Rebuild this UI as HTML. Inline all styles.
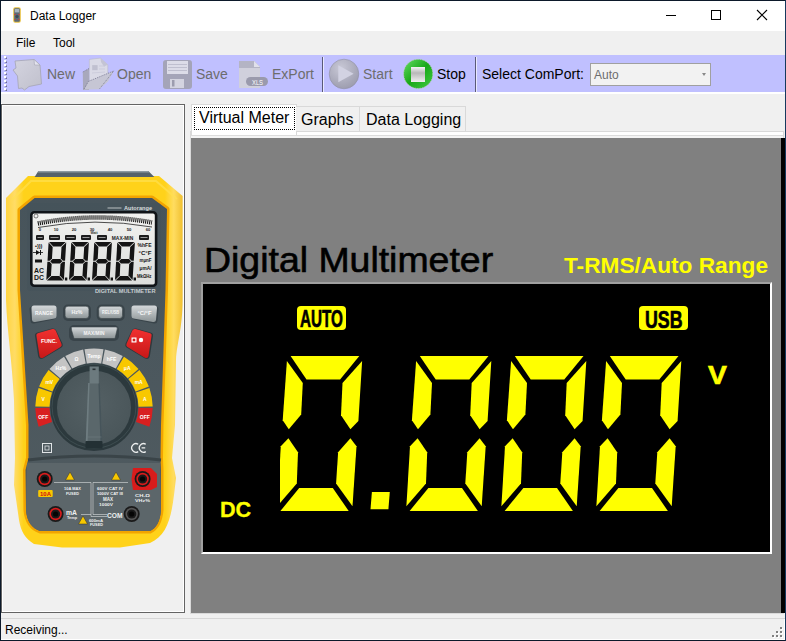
<!DOCTYPE html>
<html><head><meta charset="utf-8">
<style>
*{margin:0;padding:0;box-sizing:border-box}
html,body{width:786px;height:641px;overflow:hidden;background:#f0f0f0;font-family:"Liberation Sans",sans-serif}
.a{position:absolute}
.t{position:absolute;white-space:nowrap;line-height:1}
</style></head><body>
<div class="a" style="left:0;top:0;width:786px;height:641px;background:#f0f0f0;overflow:hidden">

<!-- title bar -->
<div class="a" style="left:0;top:0;width:786px;height:31px;background:#fff"></div>
<div class="t" style="left:30px;top:10px;font-size:12px;color:#000">Data Logger</div>
<svg class="a" style="left:0;top:0" width="786" height="31">
<rect x="13.2" y="7.3" width="7.6" height="15.4" rx="2" fill="#e8c040"/>
<rect x="14.2" y="8.3" width="5.6" height="13.4" rx="1" fill="#5a6a78"/>
<rect x="14.8" y="9" width="4.4" height="3.4" fill="#a8b4c0"/>
<circle cx="15" cy="14.5" r="0.8" fill="#c84040"/><circle cx="19" cy="14.5" r="0.8" fill="#c84040"/>
<circle cx="17" cy="16.5" r="1.6" fill="#3a4a58"/>
<circle cx="15.2" cy="19.5" r="0.7" fill="#c84040"/><circle cx="18.8" cy="19.5" r="0.7" fill="#c84040"/>
<line x1="666" y1="15.5" x2="676" y2="15.5" stroke="#000" stroke-width="1"/>
<rect x="711.5" y="10.5" width="9" height="9" fill="none" stroke="#000" stroke-width="1"/>
<path d="M757,10 L767,20 M767,10 L757,20" stroke="#000" stroke-width="1.1"/>
</svg>

<!-- menu -->
<div class="a" style="left:0;top:31px;width:786px;height:24px;background:#f0f0f0"></div>
<div class="t" style="left:16px;top:37px;font-size:12px;color:#000">File</div>
<div class="t" style="left:53px;top:37px;font-size:12px;color:#000">Tool</div>

<!-- toolbar -->
<div class="a" style="left:1px;top:55px;width:785px;height:37px;background:#c0c0ff"></div>
<div class="a" style="left:1px;top:92px;width:785px;height:2px;background:#fff"></div>


<!-- toolbar items -->
<svg class="a" style="left:0;top:0" width="786" height="100">
<defs>
<linearGradient id="gNew" x1="0" y1="0" x2="1" y2="1"><stop offset="0" stop-color="#d4d4e0"/><stop offset="1" stop-color="#c0c0cc"/></linearGradient>
<radialGradient id="gStart" cx="0.4" cy="0.3" r="0.8"><stop offset="0" stop-color="#c8c8d6"/><stop offset="1" stop-color="#9898aa"/></radialGradient>
<linearGradient id="gStop" x1="0" y1="0" x2="1" y2="1"><stop offset="0" stop-color="#66dd66"/><stop offset="0.5" stop-color="#18a818"/><stop offset="1" stop-color="#44cc44"/></linearGradient>
<linearGradient id="gSq" x1="0" y1="0" x2="0" y2="1"><stop offset="0" stop-color="#f4f4f4"/><stop offset="0.4" stop-color="#b8b8b8"/><stop offset="1" stop-color="#f0f0f0"/></linearGradient>
</defs>
<!-- New -->
<polygon points="15,61 34,59.5 40,65 41.5,84 29,86.5 24.5,90 22,88 18.5,88.5 17.5,76 13,70 16,68" fill="url(#gNew)" stroke="#a4a4b4" stroke-width="0.8"/>
<polygon points="34,59.5 40,65 34.5,65" fill="#e4e4ee" stroke="#a4a4b4" stroke-width="0.6"/>
<!-- Open -->
<polygon points="82.8,72 89,68.5 89,90 83,90" fill="#a8a8bc"/>
<polygon points="89.3,59.4 100.4,58.1 107.8,64.8 107.8,74 89.5,82" fill="#dadae6" stroke="#b4b4c4" stroke-width="0.5"/>
<polygon points="100.4,58.1 107.8,64.8 104,66.5 101,62" fill="#c4c4d4"/>
<rect x="92.2" y="65.1" width="5.4" height="5.1" fill="#c0c0d0"/>
<line x1="99" y1="66" x2="105" y2="66" stroke="#c8c8d8" stroke-width="0.8"/>
<line x1="99" y1="69" x2="105" y2="69" stroke="#c8c8d8" stroke-width="0.8"/>
<line x1="92" y1="73" x2="105" y2="72" stroke="#c8c8d8" stroke-width="0.8"/>
<polygon points="88.4,81.4 113.8,70.9 108,81.4 99.2,89.3 84,89.5" fill="#c6c6d4"/>
<polyline points="82.8,72 89,68.5" fill="none" stroke="#70708a" stroke-width="0.8" stroke-dasharray="1,1"/>
<polyline points="84,89 88.4,81.4 113.8,70.9 99.2,89.3" fill="none" stroke="#70708a" stroke-width="0.8" stroke-dasharray="1,1"/>
<!-- Save -->
<rect x="163" y="60" width="29" height="29" rx="3" fill="#a4a4b8"/>
<rect x="167" y="61" width="21" height="13" fill="#dcdce8"/>
<line x1="168" y1="64.5" x2="187" y2="64.5" stroke="#b8b8c8" stroke-width="0.8"/>
<line x1="168" y1="67.5" x2="187" y2="67.5" stroke="#b8b8c8" stroke-width="0.8"/>
<line x1="168" y1="70.5" x2="187" y2="70.5" stroke="#b8b8c8" stroke-width="0.8"/>
<rect x="170" y="79" width="14" height="9" fill="#d4d4e0"/>
<rect x="172" y="80" width="2.5" height="6.5" fill="#9c9cae"/>
<!-- ExPort -->
<polygon points="239,61 254,61 260,67 260,88 239,88" fill="#d0d0dc"/>
<polygon points="239,61 254,61 260,67 260,68 239,68" fill="#b4b4c4"/>
<polygon points="254,61 260,67 254,67" fill="#e0e0ea"/>
<rect x="246" y="77" width="22" height="9" rx="4.5" fill="#9a9aac"/>
<text x="252" y="84.5" font-family="Liberation Sans" font-size="8" fill="#fff" textLength="11" lengthAdjust="spacingAndGlyphs">XLS</text>
<!-- Start -->
<circle cx="344" cy="74" r="14.8" fill="url(#gStart)" stroke="#9090a4" stroke-width="0.6"/>
<polygon points="338.3,65.3 353.6,73.8 338.3,82.3" fill="#d2d2e2"/>
<!-- Stop -->
<circle cx="418.2" cy="73.9" r="14.6" fill="url(#gStop)" stroke="#c8c8c8" stroke-width="0.8" stroke-dasharray="1.5,1"/>
<rect x="411" y="67" width="14" height="15" fill="url(#gSq)"/>
</svg>

<div class="a" style="left:4px;top:56px;width:2px;height:2px;background:#fff"></div><div class="a" style="left:5px;top:57px;width:2px;height:2px;background:#6d6d8d;clip-path:polygon(100% 0,100% 100%,0 100%)"></div><div class="a" style="left:4px;top:60px;width:2px;height:2px;background:#fff"></div><div class="a" style="left:5px;top:61px;width:2px;height:2px;background:#6d6d8d;clip-path:polygon(100% 0,100% 100%,0 100%)"></div><div class="a" style="left:4px;top:64px;width:2px;height:2px;background:#fff"></div><div class="a" style="left:5px;top:65px;width:2px;height:2px;background:#6d6d8d;clip-path:polygon(100% 0,100% 100%,0 100%)"></div><div class="a" style="left:4px;top:68px;width:2px;height:2px;background:#fff"></div><div class="a" style="left:5px;top:69px;width:2px;height:2px;background:#6d6d8d;clip-path:polygon(100% 0,100% 100%,0 100%)"></div><div class="a" style="left:4px;top:72px;width:2px;height:2px;background:#fff"></div><div class="a" style="left:5px;top:73px;width:2px;height:2px;background:#6d6d8d;clip-path:polygon(100% 0,100% 100%,0 100%)"></div><div class="a" style="left:4px;top:76px;width:2px;height:2px;background:#fff"></div><div class="a" style="left:5px;top:77px;width:2px;height:2px;background:#6d6d8d;clip-path:polygon(100% 0,100% 100%,0 100%)"></div><div class="a" style="left:4px;top:80px;width:2px;height:2px;background:#fff"></div><div class="a" style="left:5px;top:81px;width:2px;height:2px;background:#6d6d8d;clip-path:polygon(100% 0,100% 100%,0 100%)"></div><div class="a" style="left:4px;top:84px;width:2px;height:2px;background:#fff"></div><div class="a" style="left:5px;top:85px;width:2px;height:2px;background:#6d6d8d;clip-path:polygon(100% 0,100% 100%,0 100%)"></div><div class="a" style="left:4px;top:88px;width:2px;height:2px;background:#fff"></div><div class="a" style="left:5px;top:89px;width:2px;height:2px;background:#6d6d8d;clip-path:polygon(100% 0,100% 100%,0 100%)"></div>
<div class="t" style="left:47px;top:67px;font-size:14px;color:#6d6d6d">New</div>
<div class="t" style="left:117px;top:67px;font-size:14px;color:#6d6d6d">Open</div>
<div class="t" style="left:196px;top:67px;font-size:14px;color:#6d6d6d">Save</div>
<div class="t" style="left:272px;top:67px;font-size:14px;color:#6d6d6d">ExPort</div>
<div class="a" style="left:322px;top:57px;width:1px;height:35px;background:#5a5a78"></div>
<div class="a" style="left:323px;top:57px;width:1px;height:35px;background:#e8e8ff"></div>
<div class="t" style="left:363px;top:67px;font-size:14px;color:#6d6d6d">Start</div>
<div class="t" style="left:437px;top:67px;font-size:14px;color:#000">Stop</div>
<div class="a" style="left:475px;top:57px;width:1px;height:35px;background:#5a5a78"></div>
<div class="a" style="left:476px;top:57px;width:1px;height:35px;background:#e8e8ff"></div>
<div class="t" style="left:482px;top:67px;font-size:14px;color:#000">Select ComPort:</div>
<div class="a" style="left:590px;top:63px;width:121px;height:23px;border:1px solid #a0a0a0;background:#f2f2f2"></div>
<div class="t" style="left:594px;top:69px;font-size:12px;color:#6d6d6d">Auto</div>
<div class="a" style="left:702px;top:73px;width:0;height:0;border-left:2.5px solid transparent;border-right:2.5px solid transparent;border-top:3px solid #888"></div>

<!-- left panel -->
<div class="a" style="left:1px;top:103px;width:1px;height:1px;background:#fff"></div>
<div class="a" style="left:1px;top:104px;width:184px;height:509px;border:1px solid #646464;background:#f0f0f0">
  <div class="a" style="left:0;top:0;right:0;bottom:0;border:1px solid #fff"></div>
</div>

<!-- meter --><svg class="a" style="left:0;top:0" width="186" height="614" viewBox="0 0 186 614">
<defs>
<linearGradient id="yb" x1="0" y1="0" x2="1" y2="0"><stop offset="0" stop-color="#ffd440"/><stop offset="0.05" stop-color="#ffdc66"/><stop offset="0.1" stop-color="#ffd21a"/><stop offset="0.9" stop-color="#ffd21a"/><stop offset="0.95" stop-color="#ffdc60"/><stop offset="1" stop-color="#f0c030"/></linearGradient>
<linearGradient id="face" x1="0" y1="0" x2="0" y2="1"><stop offset="0" stop-color="#47545b"/><stop offset="1" stop-color="#505b60"/></linearGradient>
<linearGradient id="lcd" x1="0" y1="0" x2="0" y2="1"><stop offset="0" stop-color="#f2f2f0"/><stop offset="1" stop-color="#dcdedc"/></linearGradient>
<linearGradient id="btn" x1="0" y1="0" x2="0" y2="1"><stop offset="0" stop-color="#d4d8da"/><stop offset="1" stop-color="#8c9496"/></linearGradient>
<linearGradient id="red" x1="0" y1="0" x2="0" y2="1"><stop offset="0" stop-color="#f03030"/><stop offset="1" stop-color="#c81818"/></linearGradient>
<radialGradient id="knob" cx="0.5" cy="0.45" r="0.55"><stop offset="0" stop-color="#546064"/><stop offset="1" stop-color="#4a565a"/></radialGradient>
<linearGradient id="ptr" x1="0" y1="0" x2="1" y2="0"><stop offset="0" stop-color="#4a5458"/><stop offset="0.5" stop-color="#6c7679"/><stop offset="1" stop-color="#424c50"/></linearGradient>
</defs>
<path d="M28,176 L159,176 L182.6,196 L182.6,300 C182.4,330 177,342 176,360 L175,425 L172,458 L176,478 L174,495 C171,520 166,536 150,543 L120,547.5 L62,547.5 L34,544 C25,538 21,532 19,520 L14,485 L15,458 L14,400 C12,360 7,330 6,300 L6,198 Z" fill="url(#yb)"/>
<path d="M12,200 L31,181 L156,181 L177,199" fill="none" stroke="#ffe050" stroke-width="2" opacity="0.7"/>
<polygon points="34.6,177 38.4,171 148.3,171 154.3,177" fill="#56626a"/>
<polygon points="38.4,171 148.3,171 149.5,172.5 37.6,172.5" fill="#8e9aa0"/>
<path d="M34.6,198 L152,198 L167,209 L165.5,290 L161,425 L160.5,458 L161,470 L161,510 C160,522 156,528 150,531 L40,531 C32,528 27,522 26,510 L25.5,470 L28.5,458 L28.5,425 L20,290 L20,210 Z" fill="none" stroke="#f2a400" stroke-width="5" stroke-linejoin="round"/>
<path d="M34.6,198 L152,198 L167,209 L165.5,290 L161,425 L160.5,458 L161,470 L161,510 C160,522 156,528 150,531 L40,531 C32,528 27,522 26,510 L25.5,470 L28.5,458 L28.5,425 L20,290 L20,210 Z" fill="url(#face)"/>
<path d="M27,463 L160,463 L161,510 C160,522 156,528 150,531 L40,531 C32,528 27,522 26,510 Z" fill="#5c666a"/>
<path d="M28,460 Q94,452 161,460" fill="none" stroke="#3a4448" stroke-width="3"/>
<rect x="27" y="203" width="134" height="88" rx="4" fill="#44515a" opacity="0.5"/>
<line x1="107.5" y1="208" x2="121.5" y2="208" stroke="#d8dcdc" stroke-width="0.8"/>
<text x="124" y="210" font-family="Liberation Sans" font-weight="bold" font-size="5.5" fill="#d8dcdc" textLength="28" lengthAdjust="spacingAndGlyphs">Autorange</text>
<rect x="31.3" y="212.3" width="124.8" height="73.4" rx="3" fill="url(#lcd)" stroke="#101418" stroke-width="2.6"/>
<text x="95" y="292.8" font-family="Liberation Sans" font-weight="bold" font-size="5.2" fill="#c8ced2" textLength="60.5" lengthAdjust="spacingAndGlyphs">DIGITAL MULTIMETER</text>
<path d="M37.8,223.5 Q95,212 152,222.5" fill="none" stroke="#1a1a1a" stroke-width="4.5" stroke-dasharray="1.1,0.9"/>
<path d="M38,227.5 Q95,217 152,227" fill="none" stroke="#222" stroke-width="0.8"/>
<circle cx="36" cy="216" r="2" fill="none" stroke="#333" stroke-width="0.6"/>
<text x="40" y="231" font-family="Liberation Sans" font-weight="bold" font-size="4.2" fill="#222" text-anchor="middle">0</text>
<text x="56" y="231" font-family="Liberation Sans" font-weight="bold" font-size="4.2" fill="#222" text-anchor="middle">10</text>
<text x="74" y="231" font-family="Liberation Sans" font-weight="bold" font-size="4.2" fill="#222" text-anchor="middle">20</text>
<text x="92" y="231" font-family="Liberation Sans" font-weight="bold" font-size="4.2" fill="#222" text-anchor="middle">30</text>
<text x="110" y="231" font-family="Liberation Sans" font-weight="bold" font-size="4.2" fill="#222" text-anchor="middle">40</text>
<text x="129" y="231" font-family="Liberation Sans" font-weight="bold" font-size="4.2" fill="#222" text-anchor="middle">50</text>
<text x="148" y="231" font-family="Liberation Sans" font-weight="bold" font-size="4.2" fill="#222" text-anchor="middle">60</text>
<text x="94" y="233.5" font-family="Liberation Sans" font-weight="bold" font-size="3.4" fill="#333" text-anchor="middle">Watt</text>
<rect x="36" y="235" width="8" height="5" rx="1" fill="#1c1c1c"/>
<rect x="37.5" y="237.2" width="5" height="0.8" fill="#bbbbbb"/>
<rect x="49" y="235" width="11" height="5" rx="1" fill="#1c1c1c"/>
<rect x="50.5" y="237.2" width="8" height="0.8" fill="#bbbbbb"/>
<rect x="65" y="235" width="11" height="5" rx="1" fill="#1c1c1c"/>
<rect x="66.5" y="237.2" width="8" height="0.8" fill="#bbbbbb"/>
<rect x="81" y="235" width="10" height="5" rx="1" fill="#1c1c1c"/>
<rect x="82.5" y="237.2" width="7" height="0.8" fill="#bbbbbb"/>
<rect x="97" y="235" width="10" height="5" rx="1" fill="#1c1c1c"/>
<rect x="98.5" y="237.2" width="7" height="0.8" fill="#bbbbbb"/>
<rect x="139" y="235" width="10" height="5" rx="1" fill="#1c1c1c"/>
<rect x="140.5" y="237.2" width="7" height="0.8" fill="#bbbbbb"/>
<text x="111.8" y="239.8" font-family="Liberation Sans" font-weight="bold" font-size="5.2" fill="#1a1a1a" textLength="21.4" lengthAdjust="spacingAndGlyphs">MAX-MIN</text>
<polygon points="49.1,242.0 65.7,242.0 61.0,246.4 53.2,246.4" fill="#141414"/>
<polygon points="66.2,242.5 65.1,260.8 62.9,260.8 60.8,258.6 61.5,246.9" fill="#141414"/>
<polygon points="65.0,261.8 63.9,280.0 59.8,275.6 60.5,263.9 62.8,261.8" fill="#141414"/>
<polygon points="46.8,280.5 63.4,280.5 59.3,276.1 51.5,276.1" fill="#141414"/>
<polygon points="47.4,261.8 49.6,261.8 51.7,263.9 51.0,275.6 46.3,280.0" fill="#141414"/>
<polygon points="48.6,242.5 52.7,246.9 52.0,258.6 49.7,260.8 47.5,260.8" fill="#141414"/>
<polygon points="50.2,261.2 52.5,259.1 60.3,259.1 62.4,261.2 60.0,263.4 52.2,263.4" fill="#141414"/>
<rect x="64.9" y="277.5" width="2.4" height="3" fill="#141414"/>
<polygon points="71.8,242.0 88.4,242.0 83.7,246.4 75.9,246.4" fill="#141414"/>
<polygon points="88.9,242.5 87.8,260.8 85.6,260.8 83.5,258.6 84.2,246.9" fill="#141414"/>
<polygon points="87.7,261.8 86.6,280.0 82.5,275.6 83.2,263.9 85.5,261.8" fill="#141414"/>
<polygon points="69.5,280.5 86.1,280.5 82.0,276.1 74.2,276.1" fill="#141414"/>
<polygon points="70.1,261.8 72.3,261.8 74.4,263.9 73.7,275.6 69.0,280.0" fill="#141414"/>
<polygon points="71.3,242.5 75.4,246.9 74.7,258.6 72.4,260.8 70.2,260.8" fill="#141414"/>
<polygon points="72.9,261.2 75.2,259.1 83.0,259.1 85.1,261.2 82.7,263.4 74.9,263.4" fill="#141414"/>
<rect x="87.6" y="277.5" width="2.4" height="3" fill="#141414"/>
<polygon points="94.8,242.0 111.4,242.0 106.7,246.4 98.9,246.4" fill="#141414"/>
<polygon points="111.9,242.5 110.8,260.8 108.6,260.8 106.5,258.6 107.2,246.9" fill="#141414"/>
<polygon points="110.7,261.8 109.6,280.0 105.5,275.6 106.2,263.9 108.5,261.8" fill="#141414"/>
<polygon points="92.5,280.5 109.1,280.5 105.0,276.1 97.2,276.1" fill="#141414"/>
<polygon points="93.1,261.8 95.3,261.8 97.4,263.9 96.7,275.6 92.0,280.0" fill="#141414"/>
<polygon points="94.3,242.5 98.4,246.9 97.7,258.6 95.4,260.8 93.2,260.8" fill="#141414"/>
<polygon points="95.9,261.2 98.2,259.1 106.0,259.1 108.1,261.2 105.7,263.4 97.9,263.4" fill="#141414"/>
<rect x="110.6" y="277.5" width="2.4" height="3" fill="#141414"/>
<polygon points="117.8,242.0 134.4,242.0 129.7,246.4 121.9,246.4" fill="#141414"/>
<polygon points="134.9,242.5 133.8,260.8 131.6,260.8 129.5,258.6 130.2,246.9" fill="#141414"/>
<polygon points="133.7,261.8 132.6,280.0 128.5,275.6 129.2,263.9 131.5,261.8" fill="#141414"/>
<polygon points="115.5,280.5 132.1,280.5 128.0,276.1 120.2,276.1" fill="#141414"/>
<polygon points="116.1,261.8 118.3,261.8 120.4,263.9 119.7,275.6 115.0,280.0" fill="#141414"/>
<polygon points="117.3,242.5 121.4,246.9 120.7,258.6 118.4,260.8 116.2,260.8" fill="#141414"/>
<polygon points="118.9,261.2 121.2,259.1 129.0,259.1 131.1,261.2 128.7,263.4 120.9,263.4" fill="#141414"/>
<rect x="133.6" y="277.5" width="2.4" height="3" fill="#141414"/>
<rect x="35" y="259.5" width="7" height="3" fill="#141414"/>
<text x="34" y="272.5" font-family="Liberation Sans" font-weight="bold" font-size="7" fill="#141414" textLength="10" lengthAdjust="spacingAndGlyphs">AC</text>
<text x="34" y="280" font-family="Liberation Sans" font-weight="bold" font-size="7" fill="#141414" textLength="10" lengthAdjust="spacingAndGlyphs">DC</text>
<text x="35" y="248" font-family="Liberation Sans" font-weight="bold" font-size="5.5" fill="#141414">•)))</text>
<polygon points="36,250 40,252.5 36,255" fill="#141414"/><rect x="40" y="250" width="1" height="5" fill="#141414"/><rect x="33" y="252" width="10" height="0.8" fill="#141414"/>
<text x="137.5" y="247" font-family="Liberation Sans" font-weight="bold" font-size="6" fill="#141414" textLength="14" lengthAdjust="spacingAndGlyphs">%hFE</text>
<text x="138.5" y="254.5" font-family="Liberation Sans" font-weight="bold" font-size="6" fill="#141414" textLength="13" lengthAdjust="spacingAndGlyphs">°C°F</text>
<text x="139.5" y="262" font-family="Liberation Sans" font-weight="bold" font-size="6" fill="#141414" textLength="12" lengthAdjust="spacingAndGlyphs">mμnF</text>
<text x="139.5" y="269.5" font-family="Liberation Sans" font-weight="bold" font-size="6" fill="#141414" textLength="12" lengthAdjust="spacingAndGlyphs">μmA/</text>
<text x="137.0" y="278" font-family="Liberation Sans" font-weight="bold" font-size="6" fill="#141414" textLength="14.5" lengthAdjust="spacingAndGlyphs">MkΩHz</text>
<rect x="63" y="304.5" width="28" height="16.5" rx="5" fill="#39444a"/>
<rect x="96.7" y="304.5" width="28" height="16.5" rx="5" fill="#39444a"/>
<rect x="69" y="325" width="50" height="16" rx="5" fill="#39444a"/>
<path d="M30.5,308 Q30.5,305.5 33,305.5 L54,305.5 Q56.5,305.5 56.5,308 L56.5,316 Q56.5,318 54.5,318.5 L35,322.5 Q32,323 31.5,320 Z" fill="#39444a" transform="translate(-1,1)"/>
<path d="M31.5,308 Q31.5,305.5 34,305.5 L54,305.5 Q56.5,305.5 56.5,308 L56.5,316 Q56.5,318 54.5,318.5 L35,322 Q32.5,322.5 32,320 Z" fill="url(#btn)"/>
<text x="44" y="315" font-family="Liberation Sans" font-weight="bold" font-size="5.2" fill="#f8f8f8" text-anchor="middle" textLength="18" lengthAdjust="spacingAndGlyphs">RANGE</text>
<rect x="65.1" y="306.2" width="23.80000000000001" height="12.300000000000011" rx="3" fill="url(#btn)" stroke="#3a4448" stroke-width="0.6"/>
<text x="77.0" y="314.35" font-family="Liberation Sans" font-weight="bold" font-size="5" fill="#f4f4f4" text-anchor="middle" textLength="11" lengthAdjust="spacingAndGlyphs">Hz%</text>
<rect x="98.7" y="306.2" width="23.799999999999997" height="12.300000000000011" rx="3" fill="url(#btn)" stroke="#3a4448" stroke-width="0.6"/>
<text x="110.6" y="314.35" font-family="Liberation Sans" font-weight="bold" font-size="5" fill="#f4f4f4" text-anchor="middle" textLength="17" lengthAdjust="spacingAndGlyphs">REL/USB</text>
<path d="M157.5,308 Q157.5,305.5 155,305.5 L134,305.5 Q131.5,305.5 131.5,308 L131.5,316 Q131.5,318 133.5,318.5 L153,322.5 Q156,323 156.5,320 Z" fill="#39444a" transform="translate(1,1)"/>
<path d="M157,308 Q157,305.5 154.5,305.5 L134,305.5 Q131.5,305.5 131.5,308 L131.5,316 Q131.5,318 133.5,318.5 L153,322 Q155.5,322.5 156,320 Z" fill="url(#btn)"/>
<text x="144.5" y="315" font-family="Liberation Sans" font-weight="bold" font-size="5.2" fill="#f8f8f8" text-anchor="middle" textLength="14" lengthAdjust="spacingAndGlyphs">°C/°F</text>
<path d="M72,327 L116,327 Q118,327 117,330 L115,338.5 L74,338.5 L71.5,330 Q71,327 72,327 Z" fill="url(#btn)" stroke="#3a4448" stroke-width="0.6"/>
<text x="94" y="334.8" font-family="Liberation Sans" font-weight="bold" font-size="4.8" fill="#f4f4f4" text-anchor="middle" textLength="21" lengthAdjust="spacingAndGlyphs">MAX/MIN</text>
<path d="M35,336 Q34.5,333 37.5,332.5 L52,328.5 Q55,328 56.2,330.5 L62.5,343.5 Q63.5,346 61.5,347.5 L43,358.5 Q39,360 38.2,356.5 Z" fill="#2f393d"/>
<path d="M36.5,336 Q36,333.5 38.5,333 L52.5,329 Q54.8,328.5 55.8,330.8 L61.5,344 Q62.2,345.8 60.5,347 L43.5,357.5 Q40,359 39.5,356 Z" fill="url(#red)"/>
<text x="49" y="343" font-family="Liberation Sans" font-weight="bold" font-size="5" fill="#fff" text-anchor="middle" textLength="16" lengthAdjust="spacingAndGlyphs">FUNC.</text>
<path d="M153,336 Q153.5,333 150.5,332.5 L136,328.5 Q133,328 131.8,330.5 L125.5,343.5 Q124.5,346 126.5,347.5 L145,358.5 Q149,360 149.8,356.5 Z" fill="#2f393d"/>
<path d="M151.5,336 Q152,333.5 149.5,333 L135.5,329 Q133.2,328.5 132.2,330.8 L126.5,344 Q125.8,345.8 127.5,347 L144.5,357.5 Q148,359 148.5,356 Z" fill="url(#red)"/>
<rect x="131.5" y="337.5" width="5" height="5" fill="#fff"/><rect x="132.7" y="338.7" width="2.6" height="2.6" fill="#d02020"/><circle cx="141" cy="340" r="2.2" fill="#fff"/>
<path d="M38.60,426.70 A58.7,58.7 0 0 1 35.30,408.02 L49.50,407.84 A44.5,44.5 0 0 0 52.00,422.01 Z" fill="#d82020"/>
<text x="43.2" y="418.5" font-family="Liberation Sans" font-weight="bold" font-size="5" fill="#fff" text-anchor="middle" transform="rotate(-0 43.2 416.3)">OFF</text>
<path d="M35.30,406.58 A58.7,58.7 0 0 1 38.60,387.90 L52.00,392.59 A44.5,44.5 0 0 0 49.50,406.76 Z" fill="#f8c800"/>
<text x="43.2" y="400.5" font-family="Liberation Sans" font-weight="bold" font-size="5" fill="#fff" text-anchor="middle" transform="rotate(-0 43.2 398.3)">V</text>
<path d="M39.09,386.55 A58.7,58.7 0 0 1 48.58,370.12 L59.56,379.11 A44.5,44.5 0 0 0 52.37,391.57 Z" fill="#f8c800"/>
<text x="49.3" y="383.7" font-family="Liberation Sans" font-weight="bold" font-size="5" fill="#fff" text-anchor="middle" transform="rotate(-0 49.3 381.5)">mV</text>
<path d="M49.50,369.02 A58.7,58.7 0 0 1 64.03,356.83 L71.28,369.04 A44.5,44.5 0 0 0 60.26,378.28 Z" fill="#c4c4c4"/>
<text x="60.8" y="370.0" font-family="Liberation Sans" font-weight="bold" font-size="5" fill="#fff" text-anchor="middle" transform="rotate(-0 60.8 367.8)">Hz%</text>
<path d="M65.27,356.11 A58.7,58.7 0 0 1 83.10,349.62 L85.74,363.57 A44.5,44.5 0 0 0 72.22,368.49 Z" fill="#c4c4c4"/>
<text x="76.4" y="361.0" font-family="Liberation Sans" font-weight="bold" font-size="5" fill="#fff" text-anchor="middle" transform="rotate(-0 76.4 358.8)">Ω</text>
<path d="M84.51,349.37 A58.7,58.7 0 0 1 103.49,349.37 L101.19,363.38 A44.5,44.5 0 0 0 86.81,363.38 Z" fill="#c4c4c4"/>
<text x="94.0" y="357.9" font-family="Liberation Sans" font-weight="bold" font-size="5" fill="#fff" text-anchor="middle" transform="rotate(0 94.0 355.7)">Temp</text>
<path d="M104.90,349.62 A58.7,58.7 0 0 1 122.73,356.11 L115.78,368.49 A44.5,44.5 0 0 0 102.26,363.57 Z" fill="#c4c4c4"/>
<text x="111.6" y="361.0" font-family="Liberation Sans" font-weight="bold" font-size="5" fill="#fff" text-anchor="middle" transform="rotate(0 111.6 358.8)">hFE</text>
<path d="M123.97,356.83 A58.7,58.7 0 0 1 138.50,369.02 L127.74,378.28 A44.5,44.5 0 0 0 116.72,369.04 Z" fill="#f8c800"/>
<text x="127.2" y="370.0" font-family="Liberation Sans" font-weight="bold" font-size="5" fill="#fff" text-anchor="middle" transform="rotate(0 127.2 367.8)">μA</text>
<path d="M139.42,370.12 A58.7,58.7 0 0 1 148.91,386.55 L135.63,391.57 A44.5,44.5 0 0 0 128.44,379.11 Z" fill="#f8c800"/>
<text x="138.7" y="383.7" font-family="Liberation Sans" font-weight="bold" font-size="5" fill="#fff" text-anchor="middle" transform="rotate(0 138.7 381.5)">mA</text>
<path d="M149.40,387.90 A58.7,58.7 0 0 1 152.70,406.58 L138.50,406.76 A44.5,44.5 0 0 0 136.00,392.59 Z" fill="#f8c800"/>
<text x="144.8" y="400.5" font-family="Liberation Sans" font-weight="bold" font-size="5" fill="#fff" text-anchor="middle" transform="rotate(0 144.8 398.3)">A</text>
<path d="M152.70,408.02 A58.7,58.7 0 0 1 149.40,426.70 L136.00,422.01 A44.5,44.5 0 0 0 138.50,407.84 Z" fill="#d82020"/>
<text x="144.8" y="418.5" font-family="Liberation Sans" font-weight="bold" font-size="5" fill="#fff" text-anchor="middle" transform="rotate(0 144.8 416.3)">OFF</text>
<circle cx="94" cy="407.3" r="43.8" fill="#2c393d"/>
<circle cx="94" cy="406.3" r="42" fill="none" stroke="#4a5a5e" stroke-width="1" opacity="0.6"/>
<circle cx="94" cy="407.8" r="37" fill="url(#knob)"/>
<polygon points="88.2,383 99.8,383 102.2,441 85.8,441" fill="#5a676b"/>
<polygon points="88.2,383 89.6,383 87.6,441 85.8,441" fill="#6f7d81"/>
<polygon points="98.4,383 99.8,383 102.2,441 100.4,441" fill="#46545a"/>
<rect x="89.6" y="366.5" width="9.2" height="17" fill="#6c7a7e"/>
<rect x="92.5" y="368.5" width="3" height="1.6" fill="#2a3236"/>
<rect x="85.5" y="441" width="17" height="7.5" rx="1" fill="#233034"/>
<line x1="86.5" y1="437" x2="101.5" y2="437" stroke="#6f7d81" stroke-width="0.6"/>
<rect x="42.5" y="443.5" width="9" height="9" fill="none" stroke="#e0e4e6" stroke-width="1"/><rect x="45" y="446" width="4" height="4" fill="none" stroke="#e0e4e6" stroke-width="0.8"/>
<path d="M138.2,444.2 A4.3,4.3 0 1 0 138.2,451.6 M145.8,444.2 A4.3,4.3 0 1 0 145.8,451.6 M141.6,447.9 L145.2,447.9" fill="none" stroke="#eef0f0" stroke-width="1.3"/>
<polygon points="133,468 151,468 157,474 157,487 151,490 133,490 131.5,479" fill="#d81c1c"/>
<circle cx="44.7" cy="479" r="8" fill="#1a1a1a"/>
<circle cx="44.7" cy="479" r="6.2" fill="#d81c1c"/>
<circle cx="44.7" cy="479" r="4.6" fill="#1a1a1a"/>
<circle cx="44.7" cy="479" r="2.6" fill="#050505"/>
<circle cx="142.6" cy="479" r="8" fill="#1a1a1a"/>
<circle cx="142.6" cy="479" r="6.2" fill="#d81c1c"/>
<circle cx="142.6" cy="479" r="4.6" fill="#1a1a1a"/>
<circle cx="142.6" cy="479" r="2.6" fill="#050505"/>
<circle cx="55.6" cy="514" r="8" fill="#1a1a1a"/>
<circle cx="55.6" cy="514" r="6.2" fill="#d81c1c"/>
<circle cx="55.6" cy="514" r="4.6" fill="#1a1a1a"/>
<circle cx="55.6" cy="514" r="2.6" fill="#050505"/>
<circle cx="131.7" cy="514" r="8" fill="#1a1a1a"/>
<circle cx="131.7" cy="514" r="6.2" fill="#555"/>
<circle cx="131.7" cy="514" r="4.6" fill="#1a1a1a"/>
<circle cx="131.7" cy="514" r="2.6" fill="#050505"/>
<rect x="38.2" y="490" width="14.5" height="7" rx="1" fill="#f8c800"/>
<text x="45.5" y="496.2" font-family="Liberation Sans" font-weight="bold" font-size="6" fill="#d01010" text-anchor="middle" textLength="11" lengthAdjust="spacingAndGlyphs">10A</text>
<path d="M54,482.5 L91,482.5 L91,516.5 L107,516.5 M93,482.5 L128,482.5 M93,482.5 L93,514.5 L107,514.5 M81,514.5 L91,514.5" fill="none" stroke="#f4f6f6" stroke-width="0.5"/>
<polygon points="70,472 74.5,480 65.5,480" fill="#f8c800" stroke="#333" stroke-width="0.5"/>
<polygon points="116,472 120.5,480 111.5,480" fill="#f8c800" stroke="#333" stroke-width="0.5"/>
<polygon points="83,516 87.5,524 78.5,524" fill="#f8c800" stroke="#333" stroke-width="0.5"/>
<text x="64" y="489.5" font-family="Liberation Sans" font-weight="bold" font-size="3.6" fill="#eef0f0" text-anchor="start" textLength="17" lengthAdjust="spacingAndGlyphs">10A MAX</text>
<text x="66" y="494.5" font-family="Liberation Sans" font-weight="bold" font-size="3.6" fill="#eef0f0" text-anchor="start" textLength="13" lengthAdjust="spacingAndGlyphs">FUSED</text>
<text x="97" y="489.5" font-family="Liberation Sans" font-weight="bold" font-size="3.6" fill="#eef0f0" text-anchor="start" textLength="26" lengthAdjust="spacingAndGlyphs">600V CAT IV</text>
<text x="97" y="494.5" font-family="Liberation Sans" font-weight="bold" font-size="3.6" fill="#eef0f0" text-anchor="start" textLength="26" lengthAdjust="spacingAndGlyphs">1000V CAT III</text>
<text x="103" y="500.5" font-family="Liberation Sans" font-weight="bold" font-size="4.5" fill="#eef0f0" text-anchor="start" textLength="10" lengthAdjust="spacingAndGlyphs">MAX</text>
<text x="99" y="506" font-family="Liberation Sans" font-weight="bold" font-size="3.6" fill="#eef0f0" text-anchor="start" textLength="14" lengthAdjust="spacingAndGlyphs">1000V</text>
<text x="107" y="518" font-family="Liberation Sans" font-weight="bold" font-size="7" fill="#eef0f0" text-anchor="start" textLength="15.5" lengthAdjust="spacingAndGlyphs">COM</text>
<text x="66" y="515" font-family="Liberation Sans" font-weight="bold" font-size="6.5" fill="#eef0f0" text-anchor="start" textLength="11" lengthAdjust="spacingAndGlyphs">mA</text>
<text x="67" y="519" font-family="Liberation Sans" font-weight="bold" font-size="4" fill="#eef0f0" text-anchor="start" textLength="10" lengthAdjust="spacingAndGlyphs">Temp</text>
<text x="89" y="521.5" font-family="Liberation Sans" font-weight="bold" font-size="3.6" fill="#eef0f0" text-anchor="start" textLength="14" lengthAdjust="spacingAndGlyphs">600mA</text>
<text x="90" y="525.5" font-family="Liberation Sans" font-weight="bold" font-size="3.6" fill="#eef0f0" text-anchor="start" textLength="13" lengthAdjust="spacingAndGlyphs">FUSED</text>
<text x="135" y="497" font-family="Liberation Sans" font-weight="bold" font-size="3.6" fill="#eef0f0" text-anchor="start" textLength="15" lengthAdjust="spacingAndGlyphs">CH-Ω</text>
<text x="135" y="501.5" font-family="Liberation Sans" font-weight="bold" font-size="3.6" fill="#eef0f0" text-anchor="start" textLength="15" lengthAdjust="spacingAndGlyphs">VHz%</text>
</svg><!-- /meter -->
<!-- tab control -->
<div class="a" style="left:190px;top:131px;width:594px;height:483px;border:1px solid #d9d9d9;background:#fff"></div>
<div class="a" style="left:191px;top:135px;width:592px;height:1px;background:#dcdcdc"></div>
<div class="a" style="left:191px;top:136px;width:592px;height:2px;background:#f4f4f4"></div>
<div class="a" style="left:191px;top:104px;width:106px;height:31px;border:1px solid #d9d9d9;border-bottom:none;background:#fff"></div>
<div class="a" style="left:194px;top:107px;width:101px;height:23px;border:1px dotted #000"></div>
<div class="a" style="left:296px;top:106px;width:64px;height:26px;border:1px solid #d9d9d9;border-left:none;background:#f0f0f0"></div>
<div class="a" style="left:360px;top:106px;width:106px;height:26px;border:1px solid #d9d9d9;border-left:none;background:#f0f0f0"></div>
<div class="t" style="left:199px;top:110px;font-size:16px;color:#000">Virtual Meter</div>
<div class="t" style="left:301px;top:112px;font-size:16px;color:#000">Graphs</div>
<div class="t" style="left:366px;top:112px;font-size:16px;color:#000">Data Logging</div>
<div class="a" style="left:191px;top:138px;width:590px;height:475px;background:#808080"></div>
<div class="a" style="left:781px;top:138px;width:4px;height:475px;background:#000"></div>

<!-- virtual meter -->
<div class="t" style="left:204px;top:243px;font-size:34.67px;color:#000;transform-origin:0 0;transform:scaleX(1.08);-webkit-text-stroke:0.6px #000">Digital Multimeter</div>
<div class="t" style="left:564px;top:256px;font-size:21.33px;font-weight:bold;color:#ff0;transform-origin:0 0;transform:scaleX(1.063)">T-RMS/Auto Range</div>
<div class="a" style="left:201px;top:282px;width:571px;height:272px;border-style:solid;border-width:2px;border-color:#a0a0a0 #fff #fff #a0a0a0;background:#000"></div>
<div class="a" style="left:297px;top:306px;width:49px;height:24px;border-radius:4px;background:#ff0"></div>
<div class="a" style="left:639px;top:306px;width:49px;height:24px;border-radius:4px;background:#ff0"></div>
<svg class="a" style="left:0;top:0" width="786" height="641"><text x="300" y="327" font-family="Liberation Sans" font-weight="bold" font-size="24.7" textLength="43" lengthAdjust="spacingAndGlyphs" fill="#000" stroke="#000" stroke-width="0.7">AUTO</text><text x="645" y="328" font-family="Liberation Sans" font-weight="bold" font-size="24.7" textLength="37.5" lengthAdjust="spacingAndGlyphs" fill="#000" stroke="#000" stroke-width="0.7">USB</text></svg>
<div class="t" style="left:708px;top:363px;font-size:25px;font-weight:bold;color:#ff0;transform-origin:0 0;transform:scaleX(1.13);-webkit-text-stroke:0.6px #ff0">V</div>
<div class="t" style="left:220px;top:499px;font-size:22px;font-weight:bold;color:#ff0;transform-origin:0 0;transform:scaleX(0.98);-webkit-text-stroke:0.3px #ff0">DC</div>
<svg class="a" style="left:280px;top:350px" width="420" height="170" fill="#ff0">
<polygon points="10.6,6.0 79.3,6.0 60.1,29.5 26.5,29.5"/>
<polygon points="6.9,11.0 22.8,33.0 21.2,64.5 8.8,79.2 2.7,70.3"/>
<polygon points="82.1,11.0 78.4,70.9 70.4,79.2 61.0,65.2 62.5,33.0"/>
<polygon points="8.4,88.3 18.0,102.3 16.8,133.4 -2.8,156.3 0.8,96.3"/>
<polygon points="70.4,88.3 76.5,96.3 72.5,156.3 56.1,133.4 58.1,102.3"/>
<polygon points="0.4,161.0 68.7,161.0 52.8,138.0 19.2,138.0"/>
<polygon points="139.8,6.0 208.5,6.0 189.3,29.5 155.7,29.5"/>
<polygon points="136.1,11.0 152.0,33.0 150.4,64.5 138.0,79.2 131.9,70.3"/>
<polygon points="211.3,11.0 207.6,70.9 199.6,79.2 190.2,65.2 191.7,33.0"/>
<polygon points="137.6,88.3 147.2,102.3 146.0,133.4 126.4,156.3 130.0,96.3"/>
<polygon points="199.6,88.3 205.7,96.3 201.7,156.3 185.3,133.4 187.3,102.3"/>
<polygon points="129.6,161.0 197.9,161.0 182.0,138.0 148.4,138.0"/>
<polygon points="234.8,6.0 303.5,6.0 284.3,29.5 250.7,29.5"/>
<polygon points="231.1,11.0 247.0,33.0 245.4,64.5 233.0,79.2 226.9,70.3"/>
<polygon points="306.3,11.0 302.6,70.9 294.6,79.2 285.2,65.2 286.7,33.0"/>
<polygon points="232.6,88.3 242.2,102.3 241.0,133.4 221.4,156.3 225.0,96.3"/>
<polygon points="294.6,88.3 300.7,96.3 296.7,156.3 280.3,133.4 282.3,102.3"/>
<polygon points="224.6,161.0 292.9,161.0 277.0,138.0 243.4,138.0"/>
<polygon points="329.8,6.0 398.5,6.0 379.3,29.5 345.7,29.5"/>
<polygon points="326.1,11.0 342.0,33.0 340.4,64.5 328.0,79.2 321.9,70.3"/>
<polygon points="401.3,11.0 397.6,70.9 389.6,79.2 380.2,65.2 381.7,33.0"/>
<polygon points="327.6,88.3 337.2,102.3 336.0,133.4 316.4,156.3 320.0,96.3"/>
<polygon points="389.6,88.3 395.7,96.3 391.7,156.3 375.3,133.4 377.3,102.3"/>
<polygon points="319.6,161.0 387.9,161.0 372.0,138.0 338.4,138.0"/>
<polygon points="91.9,141.9 109.8,141.9 108.4,159.3 90.5,159.3"/>
</svg>

<!-- status bar -->
<div class="a" style="left:1px;top:618px;width:784px;height:1px;background:#d7d7d7"></div>
<div class="t" style="left:5px;top:624px;font-size:12px;color:#000">Receiving...</div>

<div class="a" style="left:781px;top:628px;width:2px;height:2px;background:#fff"></div><div class="a" style="left:780px;top:627px;width:2px;height:2px;background:#808080"></div><div class="a" style="left:777px;top:632px;width:2px;height:2px;background:#fff"></div><div class="a" style="left:776px;top:631px;width:2px;height:2px;background:#808080"></div><div class="a" style="left:781px;top:632px;width:2px;height:2px;background:#fff"></div><div class="a" style="left:780px;top:631px;width:2px;height:2px;background:#808080"></div><div class="a" style="left:773px;top:636px;width:2px;height:2px;background:#fff"></div><div class="a" style="left:772px;top:635px;width:2px;height:2px;background:#808080"></div><div class="a" style="left:777px;top:636px;width:2px;height:2px;background:#fff"></div><div class="a" style="left:776px;top:635px;width:2px;height:2px;background:#808080"></div><div class="a" style="left:781px;top:636px;width:2px;height:2px;background:#fff"></div><div class="a" style="left:780px;top:635px;width:2px;height:2px;background:#808080"></div>
<div class="a" style="left:1px;top:639px;width:784px;height:1px;background:#fff"></div><div class="a" style="left:784px;top:619px;width:1px;height:21px;background:#fff"></div>
<!-- window border -->
<div class="a" style="left:0;top:0;width:786px;height:641px;border:1px solid #0c192a;border-right-color:#163a5e"></div>
</div>
</body></html>
